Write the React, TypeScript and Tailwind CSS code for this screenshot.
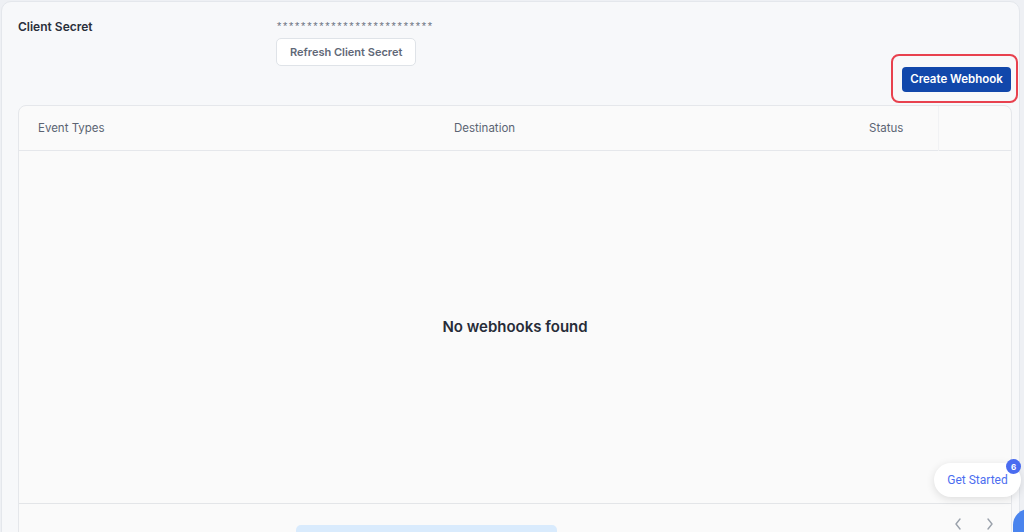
import React from "react";

export default function App() {
  return (
    <div
      className="relative w-[1024px] h-[532px] overflow-hidden bg-[#eef0f4]"
      style={{ fontFamily: "Inter, 'Noto Sans', sans-serif" }}
    >
      <div className="ml-[1px] mt-[1px] w-[1019px] h-[560px] rounded-[10px] border border-[#e4e7ec] bg-[#f7f8fa] pl-[16px] pr-[8px] pt-[16px]">
        <div className="flex">
          <div className="w-[258px] pt-[1px] text-[12px] font-semibold text-[#2a2f3a] leading-[16px]">
            Client Secret
          </div>
          <div className="flex flex-col items-start">
            <div
              className="text-[11px] tracking-[1.75px] text-[#6b7280] leading-[14px] pl-[1px] pt-[1px]"
              style={{ fontFamily: "'Liberation Sans', sans-serif" }}
            >
              **************************
            </div>
            <button className="mt-[5px] h-[28px] px-[13px] rounded-[5px] border border-[#dfe3e8] bg-white text-[11px] font-semibold text-[#5f6877]">
              Refresh Client Secret
            </button>
          </div>
        </div>
        <div className="flex justify-end mt-[-1px]">
          <div className="relative">
            <button className="h-[25px] w-[109px] rounded-[4px] bg-[#1147ab] text-[11.5px] font-semibold text-white">
              Create Webhook
            </button>
            <div className="absolute left-[-11px] top-[-11px] w-[127px] h-[49px] rounded-[8px] border-2 border-[#e8414e]" />
          </div>
        </div>
        <div className="mt-[13px] w-[994px] h-[460px] rounded-[8px] border border-[#e5e7eb] bg-[#fafafa] flex flex-col relative">
          <div className="flex items-center h-[45px] border-b border-[#e5e7eb] text-[11.5px] text-[#5b6473]">
            <div className="w-[435px] pl-[19px]">Event Types</div>
            <div className="w-[415px]">Destination</div>
            <div className="flex-1">Status</div>
          </div>
          <div className="absolute left-[919px] top-0 h-[45px] w-px bg-[#f1f2f4]" />
          <div className="h-[352px] flex items-center justify-center">
            <span className="text-[15px] font-semibold text-[#272c38]">No webhooks found</span>
          </div>
          <div className="border-t border-[#e3e5e8] flex-1 relative">
            <div className="absolute left-[277px] top-[21px] w-[261px] h-[12px] rounded-[5px] bg-[#d9ebfd]" />
            <div className="absolute left-[934px] top-[13px] flex gap-[22px] text-[#9aa1ab]">
              <svg width="10" height="14" viewBox="0 0 10 14" fill="none" stroke="currentColor" strokeWidth="1.4" strokeLinecap="round" strokeLinejoin="round">
                <path d="M7 2 L3 7 L7 12" />
              </svg>
              <svg width="10" height="14" viewBox="0 0 10 14" fill="none" stroke="currentColor" strokeWidth="1.4" strokeLinecap="round" strokeLinejoin="round">
                <path d="M3 2 L7 7 L3 12" />
              </svg>
            </div>
          </div>
        </div>
      </div>

      <div className="absolute left-[934px] top-[463px] w-[87px] h-[34px] rounded-full bg-white shadow-[0_2px_8px_rgba(0,0,0,0.12)] flex items-center justify-center">
        <span className="text-[12px] text-[#4c6ef0]" style={{ fontFamily: "Roboto, sans-serif" }}>Get Started</span>
      </div>
      <div className="absolute left-[1006px] top-[459px] w-[15px] h-[15px] rounded-full bg-[#4a6cf0] flex items-center justify-center text-[8px] font-bold text-white">
        6
      </div>
      <div className="absolute left-[1013px] top-[509px] w-[32px] h-[40px] rounded-full bg-[#4a84ee]" />
    </div>
  );
}
